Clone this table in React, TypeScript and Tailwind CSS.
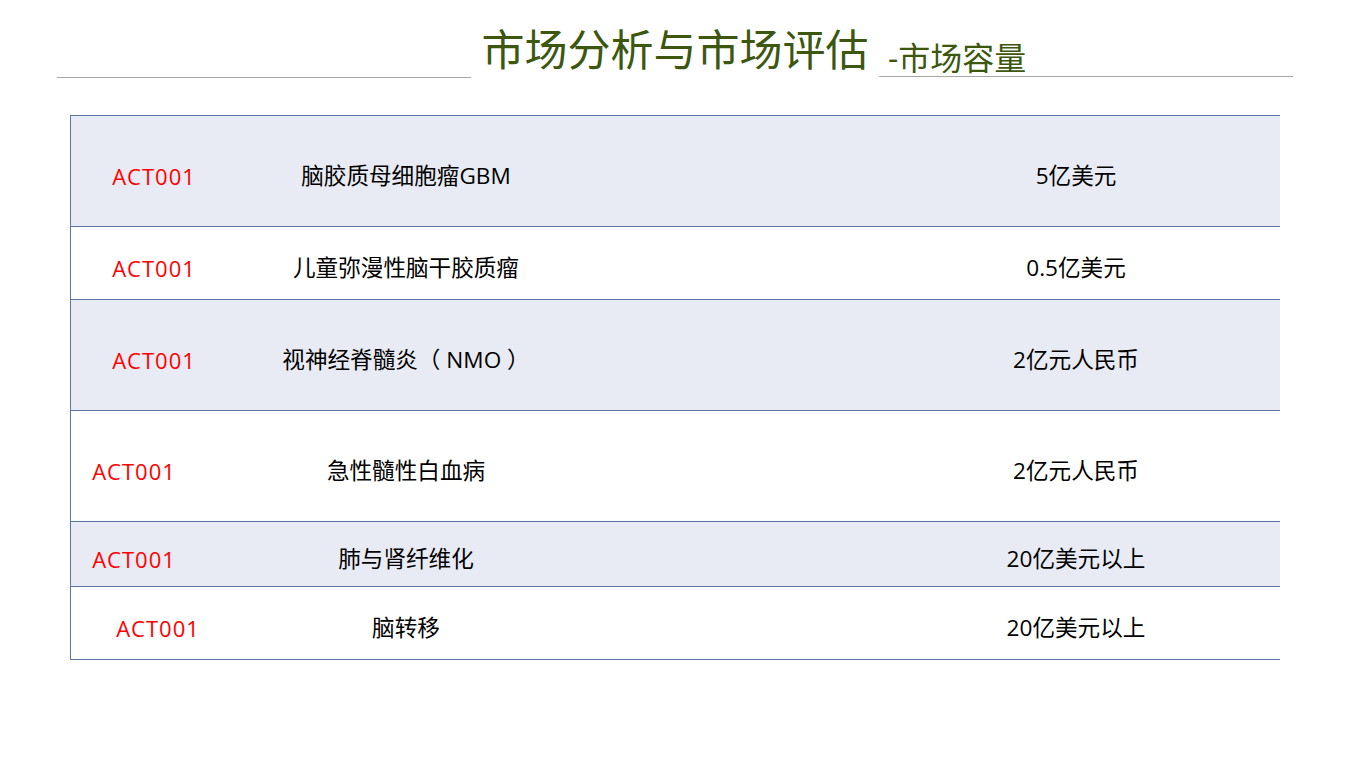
const rows = [
  { code: "ACT001", name: "脑胶质母细胞瘤GBM", value: "5亿美元", h: "h-[111px]", bg: "bg-[#e8ebf3]", shift: "" },
  { code: "ACT001", name: "儿童弥漫性脑干胶质瘤", value: "0.5亿美元", h: "h-[73px]", bg: "bg-white", shift: "" },
  { code: "ACT001", name: "视神经脊髓炎（ NMO ）", value: "2亿元人民币", h: "h-[111px]", bg: "bg-[#e8ebf3]", shift: "" },
  { code: "ACT001", name: "急性髓性白血病", value: "2亿元人民币", h: "h-[111px]", bg: "bg-white", shift: "pr-[40px]" },
  { code: "ACT001", name: "肺与肾纤维化", value: "20亿美元以上", h: "h-[65px]", bg: "bg-[#e8ebf3]", shift: "pr-[40px]" },
  { code: "ACT001", name: "脑转移", value: "20亿美元以上", h: "h-[73px]", bg: "bg-white", shift: "pl-[8px]" },
];

const font = "font-['Open_Sans','Noto_Sans_CJK_SC',sans-serif]";

export default function App() {
  return (
    <div className={`w-[1350px] h-[759px] bg-white ${font}`}>
      {/* title bar */}
      <div className="flex items-end px-[57px] pt-[23px]">
        <div className="w-[414px] shrink-0 border-b border-[#a6a6a6] mb-[-1px]" />
        <h1 className="flex-1 text-center whitespace-nowrap text-[43px] leading-[54px] text-[#3d5710]">
          市场分析与市场评估
        </h1>
        <div className="w-[414px] shrink-0 border-b border-[#a6a6a6] pl-[9px] text-[32px] leading-[36px] text-[#3d5710]">
          -市场容量
        </div>
      </div>

      {/* table */}
      <div className="ml-[70px] mt-[38px] w-[1210px] border-t border-l border-[#5b77aa]">
        {rows.map((r, i) => (
          <div
            key={i}
            className={`grid grid-cols-[166px_338px_366px_270px_1fr] items-center border-b border-[#5b77aa] pt-[10px] text-[22.6px] ${r.h} ${r.bg}`}
          >
            <div className={`text-center text-[22px] text-[#ff0000] tracking-[1px] ${r.shift}`}>{r.code}</div>
            <div className="text-center text-black whitespace-nowrap">{r.name}</div>
            <div />
            <div className="text-center text-black whitespace-nowrap">{r.value}</div>
            <div />
          </div>
        ))}
      </div>
    </div>
  );
}
